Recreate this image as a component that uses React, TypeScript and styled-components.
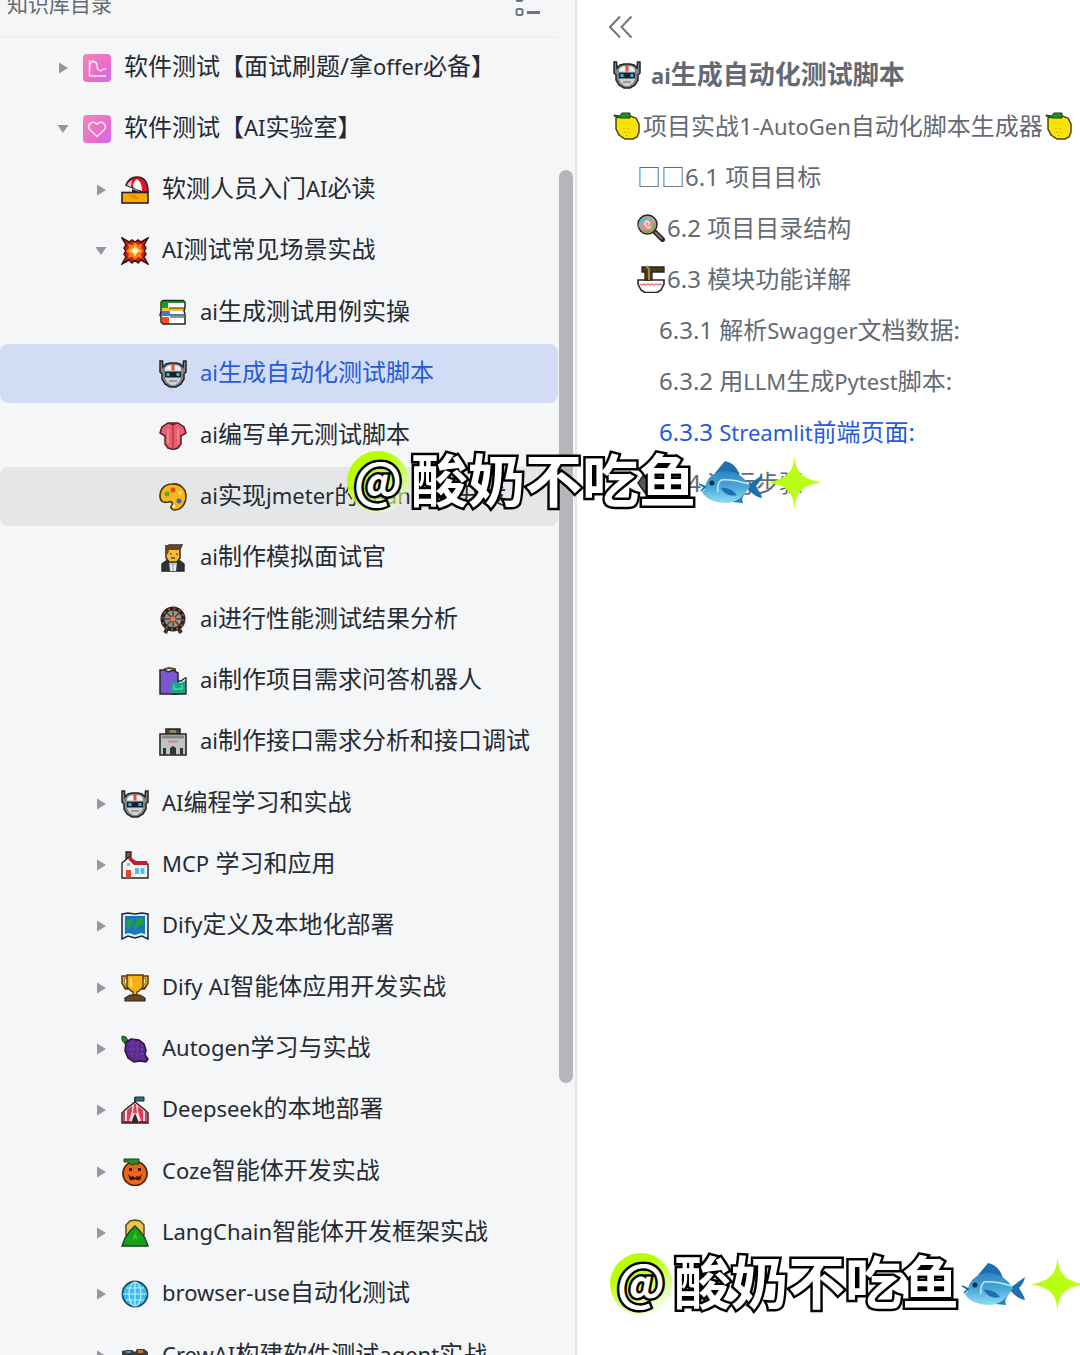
import React from "react";
import styled, { createGlobalStyle, css } from "styled-components";

const GlobalStyle = createGlobalStyle`
  *, *::before, *::after { box-sizing: border-box; }
  body {
    margin: 0;
    background: #ffffff;
    font-family: "Noto Sans", "Noto Sans CJK SC", sans-serif;
    color: #262b33;
  }
  button { font: inherit; color: inherit; border: 0; background: none; padding: 0; cursor: pointer; }
  ul { list-style: none; margin: 0; padding: 0; }
`;

/* ---------- layout ---------- */

const Shell = styled.div`
  position: relative;
  display: grid;
  grid-template-columns: minmax(0, 577fr) minmax(0, 503fr);
  height: 100vh;
  overflow: hidden;
`;

const Sidebar = styled.aside`
  display: flex;
  flex-direction: column;
  min-height: 0;
  background: #f4f6f8;
  border-right: 2px solid #e3e5e9;
  overflow: hidden;
`;

const SidebarHeader = styled.header`
  flex: none;
  display: flex;
  align-items: center;
  justify-content: space-between;
  height: 66px;
  margin: -28px 17px 0 0;
  padding: 0 17px 0 7px;
  border-bottom: 2px solid #eef0f2;
`;

const SidebarTitle = styled.h2`
  margin: 0;
  font-size: 21px;
  line-height: 28px;
  font-weight: 400;
  color: #646a73;
`;

const IconButton = styled.button`
  display: flex;
  color: #70757d;
`;

const TreeArea = styled.div`
  flex: 1;
  display: flex;
  min-height: 0;
`;

const Tree = styled.ul`
  flex: 1;
  min-width: 0;
  overflow: hidden;
`;

const TreeItem = styled.li`
  &:nth-child(3n) {
    padding-top: 1px;
  }
`;

const SubTree = styled.ul<{ $level: number }>`
  padding-top: ${(p) => (p.$level > 1 ? 1 : 0)}px;
`;

const Row = styled.button<{ $level: number; $state?: "active" | "hover" }>`
  display: flex;
  align-items: center;
  width: 100%;
  height: 59px;
  margin-bottom: 2px;
  padding-left: ${(p) => 54 + p.$level * 38}px;
  border-radius: 8px;
  text-align: left;
  ${(p) => p.$state === "active" && css`background: #d2dcf5; color: #245bdb;`}
  ${(p) => p.$state === "hover" && css`background: #e4e6e8;`}
`;

const ArrowBox = styled.span`
  flex: none;
  display: flex;
  justify-content: center;
  width: 18px;
  margin-right: 11px;
`;

const IconBox = styled.span`
  flex: none;
  display: flex;
  width: 28px;
  height: 28px;
`;

const Label = styled.span`
  margin-left: 13px;
  padding-bottom: 3px;
  font-size: 24px;
  line-height: 32px;
  white-space: nowrap;
`;

const Latin = styled.span`
  font-size: 22px;
`;

const ScrollTrack = styled.div`
  flex: none;
  display: grid;
  grid-template-rows: 132fr 913fr 272fr;
  width: 17px;
  padding: 0 2px 0 1px;
`;

const ScrollThumb = styled.div`
  grid-row: 2;
  border-radius: 7px;
  background: #b4b6b9;
`;

const Outline = styled.nav`
  min-width: 0;
  overflow: hidden;
  color: #646a73;
`;

const OutlineHeader = styled.div`
  display: flex;
  align-items: center;
  height: 49px;
  padding: 4px 0 0 31px;
`;

const OutlineLink = styled.a<{ $level: number; $bold?: boolean; $active?: boolean }>`
  display: flex;
  align-items: center;
  gap: ${(p) => (p.$bold ? 10 : 2)}px;
  height: 51px;
  padding-left: ${(p) => [36, 60, 82][p.$level]}px;
  font-size: ${(p) => (p.$bold ? 26 : 24)}px;
  line-height: 32px;
  font-weight: ${(p) => (p.$bold ? 700 : 400)};
  color: ${(p) => (p.$active ? "#245bdb" : "#646a73")};
  white-space: nowrap;
  text-decoration: none;
`;

/* ---------- watermark ---------- */

const Mark = styled.div<{ $corner?: boolean }>`
  position: absolute;
  ${(p) => (p.$corner ? "right: -4px; bottom: 40px;" : "left: 347px; top: 451px;")}
  display: flex;
  align-items: center;
  height: 62px;
  color: #ffffff;
  font-family: "Noto Sans CJK SC", sans-serif;
  font-weight: 700;
  -webkit-text-stroke: 5px #000000;
  paint-order: stroke fill;
  stroke-linejoin: round;
  pointer-events: none;
`;

const AtBadge = styled.span`
  display: flex;
  align-items: center;
  justify-content: center;
  width: 62px;
  height: 62px;
  padding-bottom: 8px;
  margin-right: 2px;
  border-radius: 50%;
  background: linear-gradient(150deg, #b9ff00 30%, rgba(250, 255, 235, 0.5) 90%);
  font-size: 48px;
  line-height: 54px;
`;

const MarkName = styled.span`
  padding-bottom: 10px;
  font-size: 57px;
  line-height: 62px;
  white-space: nowrap;
`;

const MarkArt = styled.span`
  display: flex;
  align-items: center;
  gap: 5px;
  margin-left: 3px;
`;

/* ---------- icons ---------- */

const K = "#2a2422";

const art: Record<string, React.ReactNode> = {
  chart: (
    <>
      <rect width="28" height="28" rx="4" fill="url(#pink)" />
      <path d="M6.500 6.500v15.500h16M6.500 11l3-4 4 2 1 6 3 2 3-2h2" fill="none" stroke="#ffe6f6" strokeWidth="1.500" strokeLinecap="round" strokeLinejoin="round" />
    </>
  ),
  heart: (
    <>
      <rect width="28" height="28" rx="4" fill="url(#pink)" />
      <path d="M14 21.500 6.500 14.500C4 11 7 7 10.500 7.200 12 7.300 13 8 14 9.200 15 8 16 7.300 17.500 7.200 21 7 24 11 21.500 14.500Z" fill="none" stroke="#ffe6f6" strokeWidth="1.600" strokeLinejoin="round" />
    </>
  ),
  beach: (
    <>
      <path d="M5 9C7 4 11 1 16 1c7 0 11 5 11 15h-6l-6-3Z" fill="#e3122d" stroke={K} strokeWidth="1.500" />
      <path d="M12 11c0-4 2-7 4-8 4 3 5 7 5 12l-6-2Z" fill="#fff" />
      <path d="M6 9c1-2 3-4 5-5l-1 7Z" fill="#f7c9ce" />
      <path d="M11 13l9 3.500H11Z" fill={K} />
      <rect x="1" y="16.500" width="26" height="10.500" fill="#f6a800" stroke={K} strokeWidth="1.600" />
      <path d="M9 20h6M12 22h5" stroke="#c67b00" />
    </>
  ),
  boom: (
    <>
      <path d="M1 1l7 4 3-2 3 2 3-2 3 2 7-4-4 7 2 3-2 3 2 3-2 3 4 7-7-4-3 3-3-3-3 3-3-3-7 4 4-7-2-3 2-3-2-3 2-3Z" fill="#c81e14" stroke="#3a1210" strokeWidth="1.500" />
      <path d="M7 7l4 1 3-3 3 3 4-1-1 4 3 3-3 3 1 4-4-1-3 3-3-3-4 1 1-4-3-3 3-3Z" fill="#ff7a14" />
      <path d="M14 8l2 3 4 3-4 2-2 4-2-4-4-2 4-3Z" fill="#ffd84a" />
      <circle cx="14" cy="14" r="2.500" fill="#fffbe0" />
    </>
  ),
  books: (
    <>
      <path d="M3 2h22v7H3Z" fill="#fff" />
      <path d="M3 2h22v2H9v5H3Z" fill="#169c24" />
      <path d="M3 9h22v3H3Z" fill="#f2c12e" />
      <path d="M3 12h22v6H3Z" fill="#fff" />
      <path d="M2 12h9v3h14v2H2Z" fill="#3f7fc4" />
      <path d="M3 18h22v7H3Z" fill="#fff" />
      <path d="M3 18h7v7H3Z" fill="#f4511e" />
      <path d="M4 1.500h20l2 1.500v6l-1 3 1 3v10H4l-2-2v-5l-1-2 1-3V3Z" fill="none" stroke={K} strokeWidth="1.500" />
      <path d="M10 9h15M11 18h14" stroke={K} strokeWidth="1" />
    </>
  ),
  robot: (
    <>
      <path d="M1 1h2.500l.5 6 3-3 4-1h6l4 1 3 3 .5-6H27v11l-2 2v5l-3 5-5 3h-6l-5-3-3-5v-5l-2-2Z" fill="#7f8488" stroke="#222426" strokeWidth="1.500" />
      <path d="M6 8l4-3h8l4 3v10l-2 4-4 3h-4l-4-3-2-4Z" fill="#d0d3d6" />
      <path d="M8 6h12l2 4H6Z" fill="#f0f1f2" />
      <rect x="12.500" y="4.500" width="3" height="6" fill="#ef4a36" />
      <rect x="6" y="11.500" width="16" height="6" fill="#15242c" />
      <path d="M7.500 13h3v3h-3ZM17.500 13h3v3h-3Z" fill="#35b9d6" />
      <path d="M10 21h8" stroke="#82878b" strokeWidth="1.500" />
    </>
  ),
  shirt: (
    <>
      <path d="M9 1h10l6 4 2 6-5 3v8l-3 4-5 1.500L9 26l-3-4v-8l-5-3 2-6Z" fill="#e8606f" stroke="#5a1c24" strokeWidth="1.500" />
      <path d="M9 1h10l-5 3Z" fill="#7d1f2c" />
      <path d="M14 4v23" stroke="#cc3d50" strokeWidth="2" />
      <path d="M9 7v15M19 7v15" stroke="#f0808c" strokeWidth="2" />
    </>
  ),
  palette: (
    <>
      <path d="M13 1c8-1 14 5 14 12 0 8-5 14-11 14-4 0-5-3-3-5 1-3-1-4-4-3-4 1-8 0-8-6C1 6 6 1 13 1Z" fill="#f9b51d" stroke="#4a3512" strokeWidth="1.600" />
      <circle cx="8" cy="11" r="2.500" fill="#4fae2c" />
      <circle cx="14" cy="7" r="2.500" fill="#e94a1c" />
      <circle cx="20" cy="18" r="2.500" fill="#3b6fb5" />
      <circle cx="21" cy="10" r="2" fill="#ffd968" />
      <circle cx="15" cy="23" r="1.600" fill="#fff1c2" />
    </>
  ),
  suit: (
    <>
      <path d="M3 27v-7l4-3h14l4 3v7Z" fill="#2f3338" stroke={K} strokeWidth="1.400" />
      <path d="M10 17h8l-1 10h-6Z" fill="#e6e9ee" />
      <path d="M14 18v9M11 20h6" stroke="#9da4ad" />
      <path d="M7 3l3-2h13l-2 4v9l-3 4h-8l-3-4Z" fill="#f6bd2f" stroke={K} strokeWidth="1.400" />
      <path d="M6 1h17l-2 5H10l-1 4H7Z" fill="#6e4324" />
      <path d="M11 10h1.500M17 10h1.500M12 14h4" stroke="#6a3f12" strokeWidth="1.500" />
    </>
  ),
  wheel: (
    <>
      <path d="M9 21l-3 6M19 21l3 6" stroke="#3c3836" strokeWidth="4" />
      <circle cx="14" cy="13" r="10.500" fill="#9a938e" stroke="#2e211c" strokeWidth="4" />
      <circle cx="14" cy="13" r="10.500" fill="none" stroke="#a4583a" strokeWidth="2" strokeDasharray="2 3.500" />
      <path d="M14 5v16M6 13h16M8 7l12 12M20 7 8 19" stroke="#4b4441" strokeWidth="1.500" />
      <circle cx="14" cy="13" r="2.500" fill="#f07848" />
    </>
  ),
  bags: (
    <>
      <path d="M6 5V2l4-1 6 1v3" fill="none" stroke="#5d4a20" strokeWidth="2" />
      <path d="M1 3h5l3 2 5-2 5 3v21H1Z" fill="#7a58d0" stroke={K} strokeWidth="1.500" />
      <path d="M12 15h7l3 1 5-3v14H12Z" fill="#16a886" />
      <path d="M19 14h3l4-3M27 10v17H12" stroke={K} strokeWidth="1.300" fill="none" />
      <path d="M15 18v4h8v-4" stroke="#4fd6a0" strokeWidth="1.500" fill="none" />
    </>
  ),
  station: (
    <>
      <path d="M7 7V1h14v6" fill="#46514f" stroke={K} strokeWidth="1.500" />
      <path d="M11 3.500h6" stroke="#a0914c" strokeWidth="2.500" />
      <path d="M1 6h26v21H1Z" fill="#bfc3c6" stroke={K} strokeWidth="1.600" />
      <path d="M3 7.500h22v3H3Z" fill="#80868a" />
      <path d="M9 13.500h10" stroke="#e08078" strokeWidth="2" />
      <path d="M11 27v-7l3-2 3 2v7ZM4 27v-7h3v7ZM21 27v-7h3v7Z" fill="#2f3437" />
    </>
  ),
  house: (
    <>
      <path d="M5 8V1h5v6" fill="#7d5a2b" stroke={K} strokeWidth="1.300" />
      <path d="M1 12l7-6 6 5 13 2v14H1Z" fill="#f2f4f5" stroke={K} strokeWidth="1.400" />
      <path d="M9 6l6 4h11l1 4h-14L7 8Z" fill="#c9192c" />
      <rect x="5" y="19" width="5" height="8" fill="#e2452f" />
      <path d="M14 17h4v6h-4ZM19.500 17h4v6h-4Z" fill="#4fc0ea" />
      <rect x="6" y="12" width="3" height="3" fill="#7bc7e6" />
    </>
  ),
  map: (
    <>
      <path d="M1 2l6-1 7 1 7-1 6 1v25l-6-3-7 2-7-2-6 3Z" fill="#d6eef8" stroke={K} strokeWidth="1.500" />
      <path d="M4 4h20v18l-4-1-6 2-6-2-4 1Z" fill="#1776c6" />
      <path d="M5 8l6-1 1 4-3 2v5l-3-3ZM15 7l7-1v6l-4 2-3 4-3-4 3-2Z" fill="#26a136" />
    </>
  ),
  trophy: (
    <>
      <path d="M7 3H2v6l3 5h3M21 3h5v6l-3 5h-3" fill="none" stroke="#573a0c" strokeWidth="3.500" />
      <path d="M7 3.500H2.500v5.500l3 4H8M21 3.500h4.500v5.500l-3 4H20" fill="none" stroke="#f4ad13" strokeWidth="1.500" />
      <path d="M6 1h16v12l-4 4-2 1v3h-4v-3l-2-1-4-4Z" fill="#f7b014" stroke="#573a0c" strokeWidth="1.400" />
      <path d="M10 4v9" stroke="#ffe07a" strokeWidth="2" />
      <path d="M9 21h10l5 3v3H4v-3Z" fill="#6b4423" stroke={K} strokeWidth="1.200" />
    </>
  ),
  grapes: (
    <>
      <path d="M1 1l4 1 2 4-3 3-3-4Z" fill="#2d8a2b" stroke="#173f18" />
      <path d="M5 7l5-3 8 1 5 4 2 6-1 5 3 4-2 3-6-1-6 1-6-4-3-7Z" fill="#5b2a8c" stroke="#2c1445" strokeWidth="1.500" />
      <path d="M8 9h12M8 14h15M10 19h13M11 6v15M16 7v17M21 10v14" stroke="#7d4bb0" strokeDasharray="2 2" />
    </>
  ),
  tent: (
    <>
      <path d="M14 1v7" stroke={K} strokeWidth="1.500" />
      <path d="M14 1h9v4h-9Z" fill="#1f7890" stroke={K} />
      <path d="M14 6l9 7 4 4v10H1V17l4-4Z" fill="#f6dde0" stroke={K} strokeWidth="1.500" />
      <path d="M11 10 6 14v11h2l3-10ZM17 10l5 4v11h-2l-3-10ZM13 8h2l1 9h-4ZM2 17l2-2v10H2ZM24 15l2 2v8h-2Z" fill="#dc4058" />
      <path d="M14 17l4 10h-8Z" fill="#332728" />
      <path d="M2 26h8M18 26h8" stroke="#6b3136" strokeWidth="2" />
    </>
  ),
  pumpkin: (
    <>
      <circle cx="14" cy="15.500" r="12" fill="#ec6414" stroke="#4a2109" strokeWidth="1.700" />
      <path d="M3 1h15v5h-4l-4 1-3-3H3Z" fill="#2e8b2a" stroke="#173f18" />
      <path d="M8 10h3v3H8ZM17 10h3v3h-3Z" fill="#3a1a07" />
      <path d="M7 16l3 3 2-1 2 2 2-2 2 1 3-3-2 6h-3l-2-1-2 1H9Z" fill="#2a1206" />
    </>
  ),
  hill: (
    <>
      <path d="M5 16V6l4-4 5-1 5 1 4 4v10Z" fill="#f3c24a" stroke="#5a4a1c" strokeWidth="1.500" />
      <path d="M14 7l5 5 5 7 3 8H1l3-8 5-7Z" fill="#15a11c" stroke="#14461a" strokeWidth="1.400" />
      <path d="M14 13l3 8-3-2-3 3Z" fill="#35c92a" />
    </>
  ),
  globe: (
    <>
      <circle cx="14" cy="14" r="12.500" fill="#35bdee" stroke="#1d4f66" strokeWidth="1.800" />
      <path d="M2 14h24M14 2v24M5 8h18M5 20h18" stroke="#c8f0ff" strokeWidth="1.200" />
      <ellipse cx="14" cy="14" rx="6" ry="12" fill="none" stroke="#c8f0ff" strokeWidth="1.200" />
    </>
  ),
  crew: (
    <>
      <path d="M1 9l5-1h5l3 2 2-3h7l4 3v8H1Z" fill="#3b3c3f" />
      <path d="M5 9h5v2H5Z" fill="#3aa0a8" />
      <path d="M17 8h5v3h-5Z" fill="#c27a3a" />
    </>
  ),
  lemon: (
    <>
      <path d="M3 6l5-2h9l6 2 3 6v8l-2 5-4 2h-8l-6-4-3-6Z" fill="#fbe309" stroke="#4b430c" strokeWidth="1.500" />
      <path d="M1 3l6 1 2-3h8v5H7L1 4Z" fill="#1c9431" stroke="#123f1a" />
      <path d="M11 16v1M15 16v1M12 20v1M16 20v1M14 23v1" stroke="#cfae00" strokeWidth="1.500" />
    </>
  ),
  lolly: (
    <>
      <path d="M17 17l8.500 8.500" stroke={K} strokeWidth="5" strokeLinecap="round" />
      <path d="M18 18l7 7" stroke="#8d7468" strokeWidth="2" />
      <circle cx="10.500" cy="10.500" r="9.500" fill="#ec8a80" stroke={K} strokeWidth="1.500" />
      <path d="M3 13a8 8 0 0 1 13-7" stroke="#57c4cf" strokeWidth="3" fill="none" />
      <path d="M17 9a7 7 0 0 1-11 7" stroke="#6ab56d" strokeWidth="2.500" fill="none" />
      <path d="M11 11a2 2 0 1 0-3-2 4 4 0 0 0 6 4" stroke="#ffe0dc" strokeWidth="1.800" fill="none" />
    </>
  ),
  noodles: (
    <>
      <path d="M1 15h26v4l-3 6-4 2.500H8L4 25l-3-6Z" fill="#fff" stroke={K} strokeWidth="1.600" />
      <path d="M3 19l2 1 2-1 2 1 2-1 2 1 2-1 2 1 2-1 2 1 2-1 2 1" stroke="#ee8a90" strokeWidth="1.800" fill="none" />
      <path d="M5 2h22v5H15v8H8V7H5Z" fill="#4a3a1e" stroke={K} strokeWidth="1.300" />
      <path d="M9 1l3 3v11" stroke="#a98a3a" strokeWidth="2" fill="none" />
    </>
  ),
  gem: (
    <>
      <path d="M8 4h12l7 10-7 10H8L1 14Z" fill="#55585c" stroke={K} strokeWidth="1.500" />
      <path d="M8 8h8v12H8Z" fill="#85898d" />
    </>
  ),
};

function Icon({ name }: { name: string }) {
  return (
    <IconBox>
      <svg width="28" height="28" viewBox="0 0 28 28" aria-hidden="true">
        <defs>
          <linearGradient id="pink" x1="0" y1="0" x2="1" y2="1">
            <stop offset="0" stopColor="#f584bd" />
            <stop offset="0.600" stopColor="#ea6dc8" />
            <stop offset="1" stopColor="#c86df2" />
          </linearGradient>
        </defs>
        {art[name]}
      </svg>
    </IconBox>
  );
}

function Arrow({ open }: { open?: boolean }) {
  return (
    <svg width="12" height="12" viewBox="0 0 12 12" aria-hidden="true">
      <path d={open ? "M0.500 2h11L6 10Z" : "M2 0.500v11L11 6Z"} fill="#94979c" />
    </svg>
  );
}

function Fish() {
  return (
    <svg width="64" height="46" viewBox="0 0 64 46" aria-hidden="true">
      <defs>
        <linearGradient id="fish" x1="0" y1="0" x2="0" y2="1">
          <stop offset="0" stopColor="#2f83bd" />
          <stop offset="0.500" stopColor="#4ba8d8" />
          <stop offset="1" stopColor="#93dcf2" />
        </linearGradient>
      </defs>
      <path d="M16 14 26 2c8 2 13 7 15 16Z" fill="#1f6fae" />
      <path d="M48 27 63 16c-1 5-3 8-6 11 2 4 5 7 6 12-6-1-11-5-15-10Z" fill="#1f6fae" />
      <path d="M33 43 46 34l-3 6 1 4Z" fill="#2b7cba" />
      <path d="M1 25l5 2C9 18 16 12 26 12c11 0 19 6 25 15-5 9-12 17-24 17-11 0-20-4-24-11l3-3Z" fill="url(#fish)" />
      <path d="M0 25l6 3-4 4" stroke="#1d5f98" strokeWidth="1.500" fill="none" />
      <path d="M50 25C40 22 30 20 22 21c-3 3-4 7-3 12" stroke="#b9ecfb" strokeWidth="1.500" fill="none" />
      <path d="M22 29c6-1 12 2 16 7-7 2-13-1-16-7Z" fill="#1f6fae" />
      <circle cx="13" cy="24" r="2.500" fill="#0f2c47" />
    </svg>
  );
}

function Spark() {
  return (
    <svg width="53" height="53" viewBox="0 0 53 53" aria-hidden="true">
      <path d="M26.500 0C28 14 31 22 53 26.500 31 30 28 38 26.500 53 25 38 22 30 0 26.500 22 22 25 14 26.500 0Z" fill="#b9ff14" />
    </svg>
  );
}

/* ---------- content ---------- */

/* Letters run slightly smaller than the Chinese glyphs beside them. */
function Mixed({ text }: { text: string }) {
  return (
    <>
      {text.split(/([A-Za-z-]+)/).map((part, i) => (i % 2 ? <Latin key={i}>{part}</Latin> : part))}
    </>
  );
}

type Node = {
  label: string;
  icon: string;
  leaf?: boolean;
  state?: "active" | "hover";
  children?: Node[];
};

const nodes: Node[] = [
  { label: "软件测试【面试刷题/拿offer必备】", icon: "chart" },
  {
    label: "软件测试【AI实验室】",
    icon: "heart",
    children: [
      { label: "软测人员入门AI必读", icon: "beach" },
      {
        label: "AI测试常见场景实战",
        icon: "boom",
        children: [
          { label: "ai生成测试用例实操", icon: "books", leaf: true },
          { label: "ai生成自动化测试脚本", icon: "robot", leaf: true, state: "active" },
          { label: "ai编写单元测试脚本", icon: "shirt", leaf: true },
          { label: "ai实现jmeter的Beanshell开发", icon: "palette", leaf: true, state: "hover" },
          { label: "ai制作模拟面试官", icon: "suit", leaf: true },
          { label: "ai进行性能测试结果分析", icon: "wheel", leaf: true },
          { label: "ai制作项目需求问答机器人", icon: "bags", leaf: true },
          { label: "ai制作接口需求分析和接口调试", icon: "station", leaf: true },
        ],
      },
      { label: "AI编程学习和实战", icon: "robot" },
      { label: "MCP 学习和应用", icon: "house" },
      { label: "Dify定义及本地化部署", icon: "map" },
      { label: "Dify AI智能体应用开发实战", icon: "trophy" },
      { label: "Autogen学习与实战", icon: "grapes" },
      { label: "Deepseek的本地部署", icon: "tent" },
      { label: "Coze智能体开发实战", icon: "pumpkin" },
      { label: "LangChain智能体开发框架实战", icon: "hill" },
      { label: "browser-use自动化测试", icon: "globe" },
      { label: "CrewAI构建软件测试agent实战", icon: "crew" },
    ],
  },
];

function Branch({ node, level }: { node: Node; level: number }) {
  return (
    <TreeItem>
      <Row $level={level} $state={node.state} aria-expanded={node.leaf ? undefined : !!node.children}>
        <ArrowBox>{!node.leaf && <Arrow open={!!node.children} />}</ArrowBox>
        <Icon name={node.icon} />
        <Label>
          <Mixed text={node.label} />
        </Label>
      </Row>
      {node.children && (
        <SubTree $level={level + 1}>
          {node.children.map((child) => (
            <Branch key={child.label} node={child} level={level + 1} />
          ))}
        </SubTree>
      )}
    </TreeItem>
  );
}

const outline: { text: string; level: number; icon?: string; tail?: string; bold?: boolean; active?: boolean }[] = [
  { text: "ai生成自动化测试脚本", level: 0, icon: "robot", bold: true },
  { text: "项目实战1-AutoGen自动化脚本生成器", level: 0, icon: "lemon", tail: "lemon" },
  { text: "□□6.1 项目目标", level: 1 },
  { text: "6.2 项目目录结构", level: 1, icon: "lolly" },
  { text: "6.3 模块功能详解", level: 1, icon: "noodles" },
  { text: "6.3.1 解析Swagger文档数据:", level: 2 },
  { text: "6.3.2 用LLM生成Pytest脚本:", level: 2 },
  { text: "6.3.3 Streamlit前端页面:", level: 2, active: true },
  { text: "6.4 运行步骤", level: 1, icon: "gem" },
];

function Watermark({ corner }: { corner?: boolean }) {
  return (
    <Mark $corner={corner}>
      <AtBadge>@</AtBadge>
      <MarkName>酸奶不吃鱼</MarkName>
      <MarkArt>
        <Fish />
        <Spark />
      </MarkArt>
    </Mark>
  );
}

export default function App() {
  return (
    <Shell>
      <GlobalStyle />
      <Sidebar>
        <SidebarHeader>
          <SidebarTitle>知识库目录</SidebarTitle>
          <IconButton aria-label="目录选项">
            <svg width="26" height="26" viewBox="0 0 26 26" fill="none" stroke="currentColor">
              <rect x="1.500" y="4" width="6" height="6" rx="1.500" strokeWidth="2" />
              <rect x="1.500" y="18" width="6" height="6" rx="1.500" strokeWidth="2" />
              <path d="M12 7.500h13M12 21.500h13" strokeWidth="3" />
            </svg>
          </IconButton>
        </SidebarHeader>
        <TreeArea>
          <Tree>
            {nodes.map((node) => (
              <Branch key={node.label} node={node} level={0} />
            ))}
          </Tree>
          <ScrollTrack>
            <ScrollThumb />
          </ScrollTrack>
        </TreeArea>
      </Sidebar>
      <Outline>
        <OutlineHeader>
          <IconButton aria-label="收起">
            <svg width="25" height="24" viewBox="0 0 25 24" fill="none" stroke="currentColor" strokeWidth="2">
              <path d="M12 1.500 2 12l10 10.500M23.500 1.500 13.500 12l10 10.500" />
            </svg>
          </IconButton>
        </OutlineHeader>
        {outline.map((item) => (
          <OutlineLink key={item.text} href="#" $level={item.level} $bold={item.bold} $active={item.active}>
            {item.icon && <Icon name={item.icon} />}
            <span>
              <Mixed text={item.text} />
            </span>
            {item.tail && <Icon name={item.tail} />}
          </OutlineLink>
        ))}
      </Outline>
      <Watermark />
      <Watermark corner />
    </Shell>
  );
}
